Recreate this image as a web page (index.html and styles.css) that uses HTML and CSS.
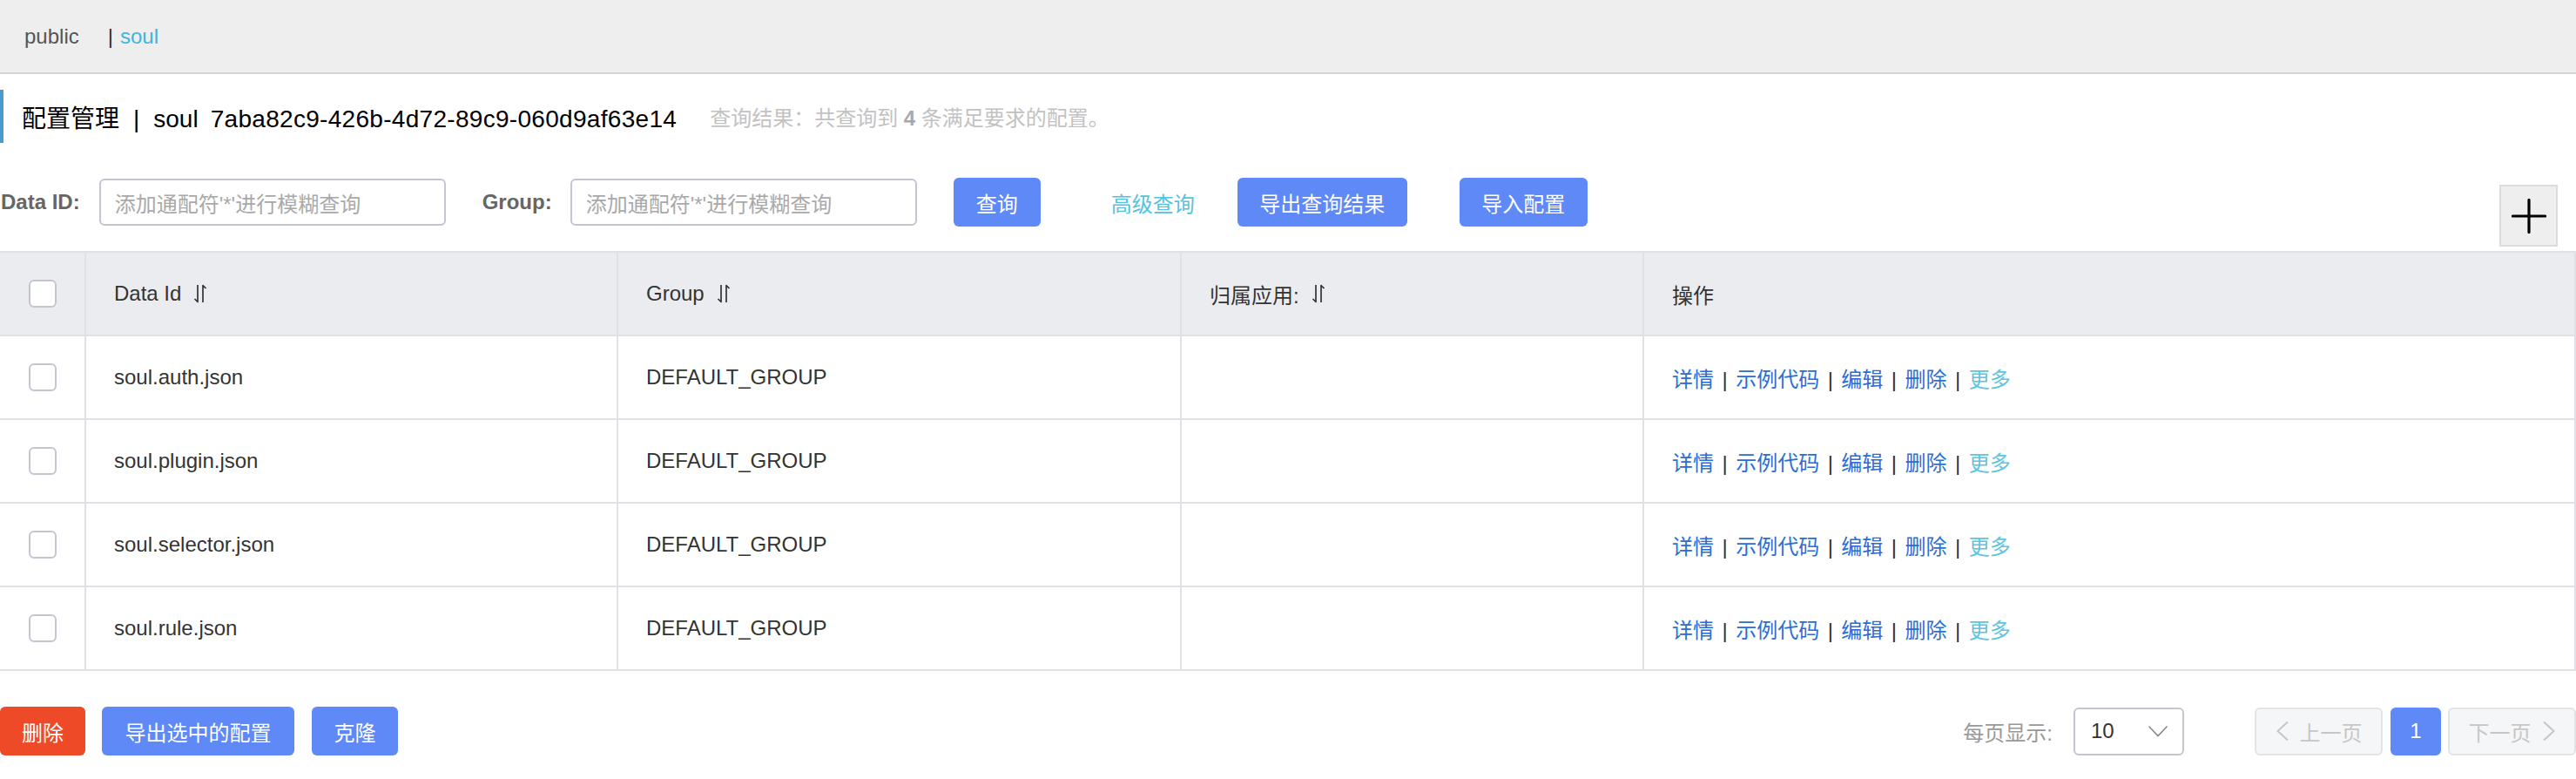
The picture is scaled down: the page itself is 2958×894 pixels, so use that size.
FILE: index.html
```html
<!DOCTYPE html>
<html lang="zh-CN">
<head>
<meta charset="utf-8">
<title>配置管理</title>
<link rel="stylesheet" href="styles.css">
</head>
<body>
<div class="topbar">
  <span class="ns">public</span>
  <span class="ns-sep">|</span>
  <span class="ns-cur">soul</span>
</div>

<div class="title-row">
  <div class="title"><span>配置管理</span><span class="title-sep">|</span><span>soul</span><span class="title-id">7aba82c9-426b-4d72-89c9-060d9af63e14</span></div>
  <div class="result">查询结果：共查询到 <b>4</b> 条满足要求的配置。</div>
</div>

<div class="search-row">
  <label class="lbl lbl-id">Data ID:</label>
  <div class="input input-id"><span class="ph">添加通配符'*'进行模糊查询</span></div>
  <label class="lbl lbl-group">Group:</label>
  <div class="input input-group"><span class="ph">添加通配符'*'进行模糊查询</span></div>
  <button class="btn btn-primary btn-query">查询</button>
  <a class="link-adv">高级查询</a>
  <button class="btn btn-primary btn-export">导出查询结果</button>
  <button class="btn btn-primary btn-import">导入配置</button>
  <div class="add-btn">
    <svg width="40" height="40" viewBox="0 0 40 40"><path d="M20 1.5V38.5M1.5 20H38.5" stroke="#000" stroke-width="3.2" stroke-linecap="round" fill="none"/></svg>
  </div>
</div>

<table class="grid">
  <colgroup>
    <col class="c-check"><col class="c-id"><col class="c-group"><col class="c-app"><col class="c-op">
  </colgroup>
  <thead>
    <tr>
      <th class="cell-check"><span class="cb"></span></th>
      <th><span class="th-in">Data Id<svg class="sort" width="16" height="22" viewBox="0 0 16 22"><path d="M5 1V20.5L1.5 17M11 21V1.5L14.5 5" stroke="#333" stroke-width="1.7" fill="none" stroke-linejoin="round"/></svg></span></th>
      <th><span class="th-in">Group<svg class="sort" width="16" height="22" viewBox="0 0 16 22"><path d="M5 1V20.5L1.5 17M11 21V1.5L14.5 5" stroke="#333" stroke-width="1.7" fill="none" stroke-linejoin="round"/></svg></span></th>
      <th><span class="th-in">归属应用:<svg class="sort" width="16" height="22" viewBox="0 0 16 22"><path d="M5 1V20.5L1.5 17M11 21V1.5L14.5 5" stroke="#333" stroke-width="1.7" fill="none" stroke-linejoin="round"/></svg></span></th>
      <th>操作</th>
    </tr>
  </thead>
  <tbody>
    <tr>
      <td class="cell-check"><span class="cb"></span></td>
      <td>soul.auth.json</td>
      <td>DEFAULT_GROUP</td>
      <td></td>
      <td class="ops"><a>详情</a> <span class="sep">|</span> <a>示例代码</a> <span class="sep">|</span> <a>编辑</a> <span class="sep">|</span> <a>删除</a> <span class="sep">|</span> <a class="more">更多</a></td>
    </tr>
    <tr>
      <td class="cell-check"><span class="cb"></span></td>
      <td>soul.plugin.json</td>
      <td>DEFAULT_GROUP</td>
      <td></td>
      <td class="ops"><a>详情</a> <span class="sep">|</span> <a>示例代码</a> <span class="sep">|</span> <a>编辑</a> <span class="sep">|</span> <a>删除</a> <span class="sep">|</span> <a class="more">更多</a></td>
    </tr>
    <tr>
      <td class="cell-check"><span class="cb"></span></td>
      <td>soul.selector.json</td>
      <td>DEFAULT_GROUP</td>
      <td></td>
      <td class="ops"><a>详情</a> <span class="sep">|</span> <a>示例代码</a> <span class="sep">|</span> <a>编辑</a> <span class="sep">|</span> <a>删除</a> <span class="sep">|</span> <a class="more">更多</a></td>
    </tr>
    <tr>
      <td class="cell-check"><span class="cb"></span></td>
      <td>soul.rule.json</td>
      <td>DEFAULT_GROUP</td>
      <td></td>
      <td class="ops"><a>详情</a> <span class="sep">|</span> <a>示例代码</a> <span class="sep">|</span> <a>编辑</a> <span class="sep">|</span> <a>删除</a> <span class="sep">|</span> <a class="more">更多</a></td>
    </tr>
  </tbody>
</table>

<div class="footer">
  <div class="footer-left">
    <button class="btn btn-danger">删除</button>
    <button class="btn btn-primary btn-export-sel">导出选中的配置</button>
    <button class="btn btn-primary btn-clone">克隆</button>
  </div>
  <div class="footer-right">
    <span class="page-size-label">每页显示:</span>
    <div class="select">
      <span>10</span>
      <svg width="24" height="14" viewBox="0 0 24 14"><path d="M1.5 1.5L12 12.5L22.5 1.5" stroke="#888" stroke-width="1.6" fill="none"/></svg>
    </div>
    <div class="pager">
      <button class="pg pg-prev"><svg width="16" height="24" viewBox="0 0 16 24"><path d="M14 1.5L2.5 12L14 22.5" stroke="#c6c6c6" stroke-width="2" fill="none"/></svg><span>上一页</span></button>
      <button class="pg pg-cur">1</button>
      <button class="pg pg-next"><span>下一页</span><svg width="16" height="24" viewBox="0 0 16 24"><path d="M2 1.5L13.5 12L2 22.5" stroke="#c6c6c6" stroke-width="2" fill="none"/></svg></button>
    </div>
  </div>
</div>
</body>
</html>
```

FILE: styles.css
```css
* { box-sizing: border-box; }

html, body {
  margin: 0;
  padding: 0;
  background: #fff;
}

body {
  font-family: "Liberation Sans", "Noto Sans CJK SC", sans-serif;
  font-size: 24px;
  color: #333;
  width: 2958px;
}

/* top namespace bar */
.topbar {
  height: 85px;
  background: #eeeeee;
  border-bottom: 2px solid #d3d3d3;
  display: flex;
  align-items: center;
  padding-left: 28px;
  font-size: 24px;
}
.ns { color: #555; }
.ns-sep { color: #333; margin-left: 33px; }
.ns-cur { color: #3db6da; margin-left: 8px; }

/* title */
.title-row {
  margin-top: 18px;
  height: 61px;
  border-left: 4px solid #4a9ccf;
  display: flex;
  align-items: center;
  padding-left: 21px;
}
.title {
  font-size: 28px;
  color: #000;
  white-space: nowrap;
}
.title-sep { margin: 0 16px; }
.title-id { margin-left: 14px; letter-spacing: 0.3px; }
.result {
  margin-left: 38px;
  font-size: 24px;
  color: #c2c2c2;
  white-space: nowrap;
}
.result b { color: #a8a8a8; }

/* search row */
.search-row {
  margin-top: 40px;
  height: 56px;
  display: flex;
  align-items: center;
}
.lbl {
  font-weight: bold;
  color: #666;
  font-size: 24px;
  white-space: nowrap;
}
.lbl-id { margin-left: 1px; margin-right: 22px; }
.lbl-group { margin-left: 42px; margin-right: 21px; }
.input {
  width: 398px;
  height: 54px;
  border: 2px solid #c4c6cf;
  border-radius: 6px;
  display: flex;
  align-items: center;
  padding-left: 16px;
  background: #fff;
  flex: none;
}
.ph { color: #a9a9a9; font-size: 24px; white-space: nowrap; }

.btn {
  font-family: inherit;
  font-size: 24px;
  height: 56px;
  border: none;
  border-radius: 6px;
  color: #fff;
  padding: 0;
  cursor: pointer;
  display: inline-flex;
  align-items: center;
  justify-content: center;
  white-space: nowrap;
  flex: none;
}
.btn-primary { background: #5e89f7; }
.btn-danger { background: #ee4a27; }
.btn-query { margin-left: 42px; width: 100px; }
.link-adv { color: #55c3df; margin-left: 81px; white-space: nowrap; }
.btn-export { margin-left: 49px; width: 195px; }
.btn-import { margin-left: 60px; width: 147px; }

.add-btn {
  margin-left: auto;
  margin-right: 21px;
  align-self: flex-start;
  margin-top: 8px;
  width: 67px;
  height: 71px;
  background: #eeeeee;
  border: 2px solid #dcdcdc;
  display: flex;
  align-items: center;
  justify-content: center;
  flex: none;
}

/* table */
.grid {
  margin-top: 28px;
  width: 100%;
  border-collapse: collapse;
  table-layout: fixed;
}
.c-check { width: 98px; }
.c-id { width: 611px; }
.c-group { width: 647px; }
.c-app { width: 531px; }
.c-op { width: auto; }

.grid th, .grid td {
  border: 2px solid #e0e1e6;
  height: 96px;
  padding: 0 32px;
  text-align: left;
  font-weight: normal;
  font-size: 24px;
  color: #333;
  vertical-align: middle;
  white-space: nowrap;
}
.grid thead th { background: #ebecf0; }
.grid th:first-child, .grid td:first-child { border-left: none; }
.grid .cell-check { padding: 0; text-align: center; }

.th-in { display: inline-flex; align-items: center; }
.sort { margin-left: 14px; }

.cb {
  display: inline-block;
  width: 32px;
  height: 32px;
  border: 2px solid #c4c6cf;
  border-radius: 6px;
  background: #fff;
  vertical-align: middle;
}

.ops { color: #333; }
.ops a { color: #2b6dd3; }
.ops a.more { color: #5cc6e0; }
.ops .sep { margin: 0 2.8px; }

/* footer */
.footer {
  margin-top: 41px;
  display: flex;
  align-items: center;
  justify-content: space-between;
}
.footer-left { display: flex; align-items: center; }
.btn-danger { width: 98px; }
.btn-export-sel { margin-left: 19px; width: 221px; }
.btn-clone { margin-left: 20px; width: 99px; }

.footer-right { display: flex; align-items: center; }
.page-size-label { color: #999; font-size: 24px; white-space: nowrap; }
.select {
  margin-left: 24px;
  width: 127px;
  height: 55px;
  border: 2px solid #c4c6cf;
  border-radius: 6px;
  display: flex;
  align-items: center;
  justify-content: space-between;
  padding: 0 16px 0 18px;
  color: #333;
}

.pager { display: flex; align-items: center; margin-left: 81px; }
.pg {
  font-family: inherit;
  font-size: 24px;
  height: 55px;
  border-radius: 6px;
  border: 2px solid #e3e4e8;
  background: #f5f6f8;
  color: #c6c6c6;
  display: inline-flex;
  align-items: center;
  justify-content: center;
  gap: 12px;
  padding: 0;
  white-space: nowrap;
}
.pg-prev, .pg-next { width: 147px; }
.pg-cur {
  width: 58px;
  margin: 0 8px 0 9px;
  background: #5e89f7;
  border-color: #5e89f7;
  color: #fff;
}
```
